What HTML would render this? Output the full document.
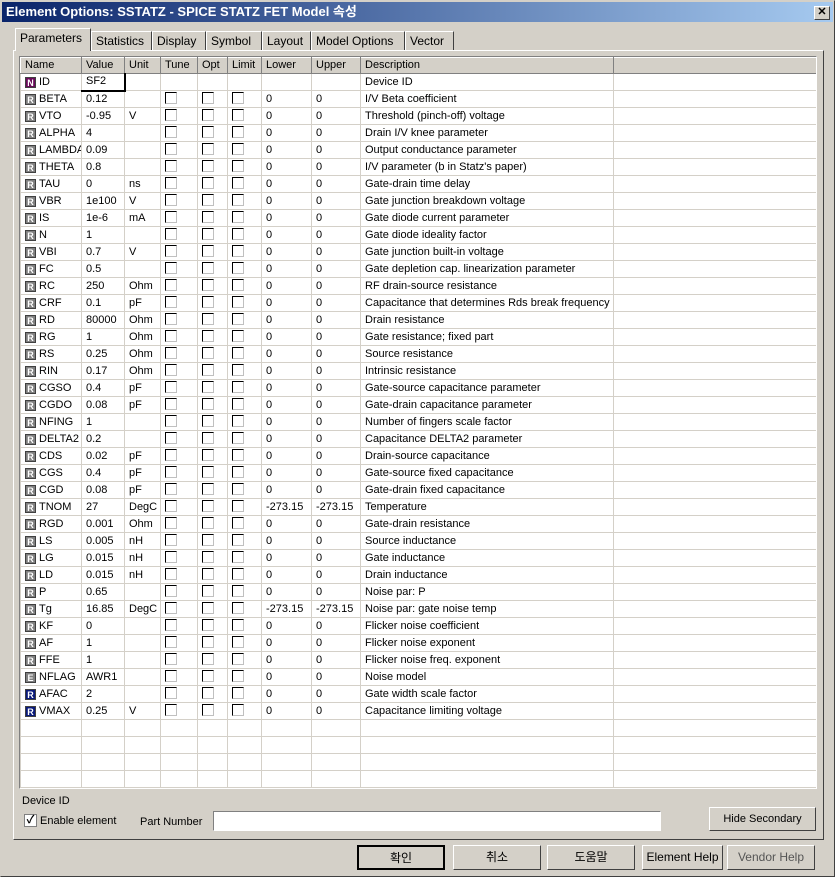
<!DOCTYPE html>
<html><head><meta charset="utf-8"><style>
*{box-sizing:border-box}
body{margin:0;width:835px;height:877px;background:#d4d0c8;font-family:"Liberation Sans","Noto Sans CJK KR",sans-serif;font-size:11px;color:#000;position:relative;overflow:hidden}
.abs{position:absolute}
#win{left:0;top:0;width:835px;height:877px;border:1px solid #404040;border-top-color:#d4d0c8;border-left-color:#d4d0c8}
#title{left:2px;top:2px;width:831px;height:20px;background:linear-gradient(to right,#0a246a,#a6caf0);color:#fff;font-weight:bold;font-size:13px;line-height:20px;padding-left:4px}
#close{left:814px;top:6px;width:16px;height:14px;background:#d4d0c8;border:1px solid;border-color:#fff #404040 #404040 #fff;font-size:11px;line-height:11px;text-align:center;font-weight:bold}
.tab{top:31px;height:19px;border:1px solid;border-color:#fff #404040 transparent #fff;border-bottom:none;padding:2px 4px 0;font-size:12px;white-space:nowrap}
.tab.sel{top:28px;height:23px;background:#d4d0c8;z-index:2}
#panel{left:13px;top:50px;width:811px;height:790px;border:1px solid;border-color:#fff #404040 #404040 #fff}
#grid{left:19px;top:56px;width:798px;height:733px;background:#fff;border:1px solid;border-color:#808080 #fff #fff #808080;overflow:hidden}
table{border-collapse:collapse;table-layout:fixed;position:absolute;left:0;top:0;width:798px}
td{height:17px;border:1px solid #d4d0c8;padding:0 0 0 4px;white-space:nowrap;overflow:hidden;line-height:15px}
tr.h td{background:#d4d0c8;border:1px solid;border-color:#fff #808080 #808080 #fff;height:16px}
.i{display:inline-block;width:11px;height:11px;background:#808080;color:#fff;font-size:9px;font-weight:bold;line-height:11px;text-align:center;vertical-align:-1px;margin-right:3px;border:1px solid #404040}
.n{background:#6a0a5a}.b{background:#0a1a7a}
.c{display:inline-block;width:12px;height:12px;border:1px solid #000;border-right-color:#c0c0c0;border-bottom-color:#c0c0c0;background:#fff;vertical-align:-2px}
.btn{height:25px;border:1px solid;border-color:#fff #404040 #404040 #fff;text-align:center;line-height:23px;font-size:12px;background:#d4d0c8}
</style></head><body>
<div id="win" class="abs"></div>
<div id="title" class="abs">Element Options: SSTATZ - SPICE STATZ FET Model 속성</div>
<div id="close" class="abs">✕</div>
<div id="panel" class="abs"></div>
<div class="abs tab sel" style="left:15px;width:76px">Parameters</div>
<div class="abs tab" style="left:91px;width:61px">Statistics</div>
<div class="abs tab" style="left:152px;width:54px">Display</div>
<div class="abs tab" style="left:206px;width:56px">Symbol</div>
<div class="abs tab" style="left:262px;width:49px">Layout</div>
<div class="abs tab" style="left:311px;width:94px">Model Options</div>
<div class="abs tab" style="left:405px;width:49px">Vector</div>
<div id="grid" class="abs"><table>
<colgroup><col style="width:61px"><col style="width:43px"><col style="width:36px"><col style="width:37px"><col style="width:30px"><col style="width:34px"><col style="width:50px"><col style="width:49px"><col style="width:253px"><col style="width:205px"></colgroup>
<tr class="h"><td>Name</td><td>Value</td><td>Unit</td><td>Tune</td><td>Opt</td><td>Limit</td><td>Lower</td><td>Upper</td><td>Description</td><td></td></tr>
<tr><td><span class="i n">N</span>ID</td><td style="border:1px solid #000;border-width:1px 2px 2px 1px">SF2</td><td></td><td></td><td></td><td></td><td></td><td></td><td>Device ID</td><td></td></tr>
<tr><td><span class="i">R</span>BETA</td><td>0.12</td><td></td><td><span class="c"></span></td><td><span class="c"></span></td><td><span class="c"></span></td><td>0</td><td>0</td><td>I/V Beta coefficient</td><td></td></tr>
<tr><td><span class="i">R</span>VTO</td><td>-0.95</td><td>V</td><td><span class="c"></span></td><td><span class="c"></span></td><td><span class="c"></span></td><td>0</td><td>0</td><td>Threshold (pinch-off) voltage</td><td></td></tr>
<tr><td><span class="i">R</span>ALPHA</td><td>4</td><td></td><td><span class="c"></span></td><td><span class="c"></span></td><td><span class="c"></span></td><td>0</td><td>0</td><td>Drain I/V knee parameter</td><td></td></tr>
<tr><td><span class="i">R</span>LAMBDA</td><td>0.09</td><td></td><td><span class="c"></span></td><td><span class="c"></span></td><td><span class="c"></span></td><td>0</td><td>0</td><td>Output conductance parameter</td><td></td></tr>
<tr><td><span class="i">R</span>THETA</td><td>0.8</td><td></td><td><span class="c"></span></td><td><span class="c"></span></td><td><span class="c"></span></td><td>0</td><td>0</td><td>I/V parameter (b in Statz's paper)</td><td></td></tr>
<tr><td><span class="i">R</span>TAU</td><td>0</td><td>ns</td><td><span class="c"></span></td><td><span class="c"></span></td><td><span class="c"></span></td><td>0</td><td>0</td><td>Gate-drain time delay</td><td></td></tr>
<tr><td><span class="i">R</span>VBR</td><td>1e100</td><td>V</td><td><span class="c"></span></td><td><span class="c"></span></td><td><span class="c"></span></td><td>0</td><td>0</td><td>Gate junction breakdown voltage</td><td></td></tr>
<tr><td><span class="i">R</span>IS</td><td>1e-6</td><td>mA</td><td><span class="c"></span></td><td><span class="c"></span></td><td><span class="c"></span></td><td>0</td><td>0</td><td>Gate diode current parameter</td><td></td></tr>
<tr><td><span class="i">R</span>N</td><td>1</td><td></td><td><span class="c"></span></td><td><span class="c"></span></td><td><span class="c"></span></td><td>0</td><td>0</td><td>Gate diode ideality factor</td><td></td></tr>
<tr><td><span class="i">R</span>VBI</td><td>0.7</td><td>V</td><td><span class="c"></span></td><td><span class="c"></span></td><td><span class="c"></span></td><td>0</td><td>0</td><td>Gate junction built-in voltage</td><td></td></tr>
<tr><td><span class="i">R</span>FC</td><td>0.5</td><td></td><td><span class="c"></span></td><td><span class="c"></span></td><td><span class="c"></span></td><td>0</td><td>0</td><td>Gate depletion cap. linearization parameter</td><td></td></tr>
<tr><td><span class="i">R</span>RC</td><td>250</td><td>Ohm</td><td><span class="c"></span></td><td><span class="c"></span></td><td><span class="c"></span></td><td>0</td><td>0</td><td>RF drain-source resistance</td><td></td></tr>
<tr><td><span class="i">R</span>CRF</td><td>0.1</td><td>pF</td><td><span class="c"></span></td><td><span class="c"></span></td><td><span class="c"></span></td><td>0</td><td>0</td><td>Capacitance that determines Rds break frequency</td><td></td></tr>
<tr><td><span class="i">R</span>RD</td><td>80000</td><td>Ohm</td><td><span class="c"></span></td><td><span class="c"></span></td><td><span class="c"></span></td><td>0</td><td>0</td><td>Drain resistance</td><td></td></tr>
<tr><td><span class="i">R</span>RG</td><td>1</td><td>Ohm</td><td><span class="c"></span></td><td><span class="c"></span></td><td><span class="c"></span></td><td>0</td><td>0</td><td>Gate resistance; fixed part</td><td></td></tr>
<tr><td><span class="i">R</span>RS</td><td>0.25</td><td>Ohm</td><td><span class="c"></span></td><td><span class="c"></span></td><td><span class="c"></span></td><td>0</td><td>0</td><td>Source resistance</td><td></td></tr>
<tr><td><span class="i">R</span>RIN</td><td>0.17</td><td>Ohm</td><td><span class="c"></span></td><td><span class="c"></span></td><td><span class="c"></span></td><td>0</td><td>0</td><td>Intrinsic resistance</td><td></td></tr>
<tr><td><span class="i">R</span>CGSO</td><td>0.4</td><td>pF</td><td><span class="c"></span></td><td><span class="c"></span></td><td><span class="c"></span></td><td>0</td><td>0</td><td>Gate-source capacitance parameter</td><td></td></tr>
<tr><td><span class="i">R</span>CGDO</td><td>0.08</td><td>pF</td><td><span class="c"></span></td><td><span class="c"></span></td><td><span class="c"></span></td><td>0</td><td>0</td><td>Gate-drain capacitance parameter</td><td></td></tr>
<tr><td><span class="i">R</span>NFING</td><td>1</td><td></td><td><span class="c"></span></td><td><span class="c"></span></td><td><span class="c"></span></td><td>0</td><td>0</td><td>Number of fingers scale factor</td><td></td></tr>
<tr><td><span class="i">R</span>DELTA2</td><td>0.2</td><td></td><td><span class="c"></span></td><td><span class="c"></span></td><td><span class="c"></span></td><td>0</td><td>0</td><td>Capacitance DELTA2 parameter</td><td></td></tr>
<tr><td><span class="i">R</span>CDS</td><td>0.02</td><td>pF</td><td><span class="c"></span></td><td><span class="c"></span></td><td><span class="c"></span></td><td>0</td><td>0</td><td>Drain-source capacitance</td><td></td></tr>
<tr><td><span class="i">R</span>CGS</td><td>0.4</td><td>pF</td><td><span class="c"></span></td><td><span class="c"></span></td><td><span class="c"></span></td><td>0</td><td>0</td><td>Gate-source fixed capacitance</td><td></td></tr>
<tr><td><span class="i">R</span>CGD</td><td>0.08</td><td>pF</td><td><span class="c"></span></td><td><span class="c"></span></td><td><span class="c"></span></td><td>0</td><td>0</td><td>Gate-drain fixed capacitance</td><td></td></tr>
<tr><td><span class="i">R</span>TNOM</td><td>27</td><td>DegC</td><td><span class="c"></span></td><td><span class="c"></span></td><td><span class="c"></span></td><td>-273.15</td><td>-273.15</td><td>Temperature</td><td></td></tr>
<tr><td><span class="i">R</span>RGD</td><td>0.001</td><td>Ohm</td><td><span class="c"></span></td><td><span class="c"></span></td><td><span class="c"></span></td><td>0</td><td>0</td><td>Gate-drain resistance</td><td></td></tr>
<tr><td><span class="i">R</span>LS</td><td>0.005</td><td>nH</td><td><span class="c"></span></td><td><span class="c"></span></td><td><span class="c"></span></td><td>0</td><td>0</td><td>Source inductance</td><td></td></tr>
<tr><td><span class="i">R</span>LG</td><td>0.015</td><td>nH</td><td><span class="c"></span></td><td><span class="c"></span></td><td><span class="c"></span></td><td>0</td><td>0</td><td>Gate inductance</td><td></td></tr>
<tr><td><span class="i">R</span>LD</td><td>0.015</td><td>nH</td><td><span class="c"></span></td><td><span class="c"></span></td><td><span class="c"></span></td><td>0</td><td>0</td><td>Drain inductance</td><td></td></tr>
<tr><td><span class="i">R</span>P</td><td>0.65</td><td></td><td><span class="c"></span></td><td><span class="c"></span></td><td><span class="c"></span></td><td>0</td><td>0</td><td>Noise par: P</td><td></td></tr>
<tr><td><span class="i">R</span>Tg</td><td>16.85</td><td>DegC</td><td><span class="c"></span></td><td><span class="c"></span></td><td><span class="c"></span></td><td>-273.15</td><td>-273.15</td><td>Noise par: gate noise temp</td><td></td></tr>
<tr><td><span class="i">R</span>KF</td><td>0</td><td></td><td><span class="c"></span></td><td><span class="c"></span></td><td><span class="c"></span></td><td>0</td><td>0</td><td>Flicker noise coefficient</td><td></td></tr>
<tr><td><span class="i">R</span>AF</td><td>1</td><td></td><td><span class="c"></span></td><td><span class="c"></span></td><td><span class="c"></span></td><td>0</td><td>0</td><td>Flicker noise exponent</td><td></td></tr>
<tr><td><span class="i">R</span>FFE</td><td>1</td><td></td><td><span class="c"></span></td><td><span class="c"></span></td><td><span class="c"></span></td><td>0</td><td>0</td><td>Flicker noise freq. exponent</td><td></td></tr>
<tr><td><span class="i">E</span>NFLAG</td><td>AWR1</td><td></td><td><span class="c"></span></td><td><span class="c"></span></td><td><span class="c"></span></td><td>0</td><td>0</td><td>Noise model</td><td></td></tr>
<tr><td><span class="i b">R</span>AFAC</td><td>2</td><td></td><td><span class="c"></span></td><td><span class="c"></span></td><td><span class="c"></span></td><td>0</td><td>0</td><td>Gate width scale factor</td><td></td></tr>
<tr><td><span class="i b">R</span>VMAX</td><td>0.25</td><td>V</td><td><span class="c"></span></td><td><span class="c"></span></td><td><span class="c"></span></td><td>0</td><td>0</td><td>Capacitance limiting voltage</td><td></td></tr>
<tr><td></td><td></td><td></td><td></td><td></td><td></td><td></td><td></td><td></td><td></td></tr>
<tr><td></td><td></td><td></td><td></td><td></td><td></td><td></td><td></td><td></td><td></td></tr>
<tr><td></td><td></td><td></td><td></td><td></td><td></td><td></td><td></td><td></td><td></td></tr>
<tr><td></td><td></td><td></td><td></td><td></td><td></td><td></td><td></td><td></td><td></td></tr>
</table></div>
<div class="abs" style="left:22px;top:795px">Device ID</div>
<div class="abs" style="left:24px;top:814px;width:13px;height:13px;border:1px solid #808080;background:#fff;font-size:11px;line-height:11px;text-align:center;font-weight:bold">✓</div>
<div class="abs" style="left:40px;top:815px">Enable element</div>
<div class="abs" style="left:140px;top:816px">Part Number</div>
<div class="abs" style="left:213px;top:811px;width:448px;height:20px;background:#fff;border:1px solid;border-color:#808080 #fff #fff #808080"></div>
<div class="abs btn" style="left:709px;top:807px;width:107px;height:24px;font-size:11px">Hide Secondary</div>
<div class="abs btn" style="left:357px;top:845px;width:88px;border:2px solid #000">확인</div>
<div class="abs btn" style="left:453px;top:845px;width:88px">취소</div>
<div class="abs btn" style="left:547px;top:845px;width:88px">도움말</div>
<div class="abs btn" style="left:642px;top:845px;width:81px">Element Help</div>
<div class="abs btn" style="left:727px;top:845px;width:88px;color:#555">Vendor Help</div>
</body></html>
